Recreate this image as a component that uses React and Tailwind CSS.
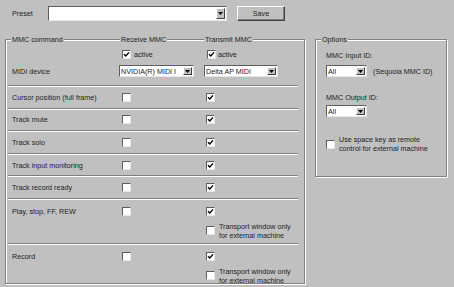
import React from 'react';

const Check = ({ checked, className = '' }) => (
  <span
    className={`flex w-[9px] h-[9px] shrink-0 items-center justify-center bg-white border border-t-[#5e5e5e] border-l-[#5e5e5e] border-r-[#e6e6e6] border-b-[#e6e6e6] ${className}`}
  >
    {checked && (
      <svg width="7" height="7" viewBox="0 0 7 7">
        <path d="M1 3.2 L2.8 5 L6 1.4" fill="none" stroke="#000" strokeWidth="1.4" />
      </svg>
    )}
  </span>
);

const Combo = ({ value = '', className = '' }) => (
  <div
    className={`flex items-stretch bg-white border border-t-[#5e5e5e] border-l-[#5e5e5e] border-r-[#e6e6e6] border-b-[#e6e6e6] ${className}`}
  >
    <span className="flex flex-1 items-center overflow-hidden whitespace-nowrap pl-[1px]">{value}</span>
    <span className="m-[1px] flex w-[9px] items-center justify-center bg-[#c0c0c0] border border-t-white border-l-white border-r-[#404040] border-b-[#404040]">
      <svg width="5" height="3" viewBox="0 0 5 3">
        <path d="M0 0H5L2.5 3Z" fill="#000" />
      </svg>
    </span>
  </div>
);

const Sep = () => <div className="h-[2px] border-y border-t-[#808080] border-b-white" />;

const Transport = () => (
  <div className="mt-[6px] flex items-center gap-[4px]">
    <Check />
    <span className="leading-[9px]">
      Transport window only
      <br />
      for external machine
    </span>
  </div>
);

const commands = [
  'Cursor position (full frame)',
  'Track mute',
  'Track solo',
  'Track input monitoring',
  'Track record ready',
];

export default function App() {
  return (
    <div className="w-[454px] h-[287px] overflow-hidden bg-[#c0c0c0] font-['Liberation_Sans',Arial,sans-serif] text-[7.2px] leading-[9px] text-[#1e1e1e]">
      {/* Preset row */}
      <div className="mt-[6px] flex h-[15px] items-center">
        <span className="ml-[12px] w-[36px]">Preset</span>
        <Combo className="h-[15px] w-[179px]" />
        <button className="ml-[10px] flex h-[15px] w-[48px] items-center justify-center bg-[#c0c0c0] border border-t-white border-l-white border-r-[#404040] border-b-[#404040] shadow-[inset_-1px_-1px_0_#808080]">
          Save
        </button>
      </div>

      <div className="mt-[18px] flex items-start">
        {/* MMC command group */}
        <div className="ml-[5px] flex h-[245px] w-[300px] flex-col border border-[#808080] shadow-[inset_1px_1px_0_#fff,1px_1px_0_#fff]">
          <div className="-mt-[5px] grid h-[9px] grid-cols-[113px_85px_1fr] justify-items-start">
            <span className="ml-[5px] bg-[#c0c0c0] px-[1px]">MMC command</span>
            <span className="ml-[1px] bg-[#c0c0c0] px-[1px]">Receive MMC</span>
            <span className="bg-[#c0c0c0] px-[1px]">Transmit MMC</span>
          </div>

          <div className="mt-[6px] grid h-[9px] grid-cols-[113px_85px_1fr] items-center">
            <span />
            <span className="ml-[3px] flex items-center gap-[3px]">
              <Check checked />
              active
            </span>
            <span className="ml-[3px] flex items-center gap-[2px]">
              <Check checked />
              active
            </span>
          </div>

          <div className="mt-[6px] grid h-[12px] grid-cols-[113px_85px_1fr] items-center">
            <span className="pl-[6px]">MIDI device</span>
            <Combo value="NVIDIA(R) MIDI I" className="h-[12px] w-[75px]" />
            <Combo value="Delta AP MIDI" className="h-[12px] w-[74px]" />
          </div>

          <div className="ml-[2px] mr-[6px] mt-[8px] flex flex-1 flex-col">
            {commands.map((c) => (
              <React.Fragment key={c}>
                <Sep />
                <div className="grid h-[20.6px] grid-cols-[111px_85px_1fr] items-center">
                  <span className="pl-[4px]">{c}</span>
                  <Check className="ml-[3px]" />
                  <Check checked className="ml-[2px]" />
                </div>
              </React.Fragment>
            ))}

            <Sep />
            <div className="grid h-[43px] grid-cols-[111px_85px_1fr] content-start pt-[7px]">
              <span className="pl-[4px]">Play, stop, FF, REW</span>
              <Check className="ml-[3px]" />
              <div className="ml-[2px]">
                <Check checked />
                <Transport />
              </div>
            </div>

            <Sep />
            <div className="grid flex-1 grid-cols-[111px_85px_1fr] content-start pt-[7px]">
              <span className="pl-[4px]">Record</span>
              <Check className="ml-[3px]" />
              <div className="ml-[2px]">
                <Check checked />
                <Transport />
              </div>
            </div>
          </div>
        </div>

        {/* Options group */}
        <div className="ml-[10px] flex h-[138px] w-[132px] flex-col border border-[#808080] shadow-[inset_1px_1px_0_#fff,1px_1px_0_#fff]">
          <span className="-mt-[5px] ml-[5px] h-[9px] self-start bg-[#c0c0c0] px-[1px]">Options</span>
          <span className="ml-[10px] mt-[7px]">MMC Input ID:</span>
          <div className="ml-[10px] mt-[5px] flex items-center gap-[6px]">
            <Combo value="All" className="h-[12px] w-[41px]" />
            <span>(Sequoia MMC ID)</span>
          </div>
          <span className="ml-[10px] mt-[16px]">MMC Output ID:</span>
          <Combo value="All" className="ml-[10px] mt-[3px] h-[12px] w-[41px]" />
          <div className="ml-[10px] mt-[18px] flex items-center gap-[4px]">
            <Check />
            <span>
              Use space key as remote
              <br />
              control for external machine
            </span>
          </div>
        </div>
      </div>
    </div>
  );
}
